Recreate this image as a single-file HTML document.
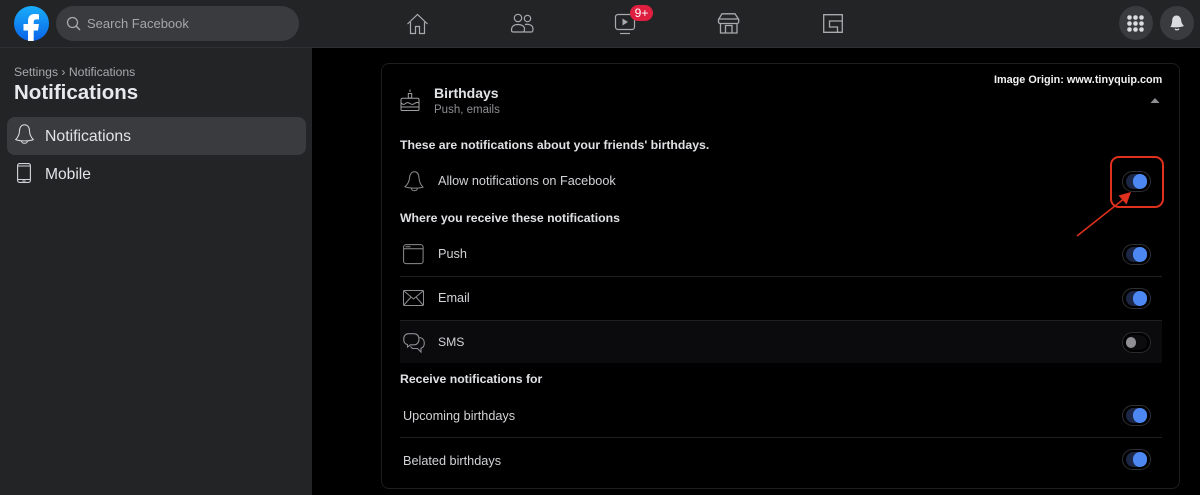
<!DOCTYPE html>
<html><head><meta charset="utf-8"><style>
html,body{margin:0;padding:0;width:1200px;height:495px;overflow:hidden;background:#000;font-family:"Liberation Sans",sans-serif;}
.a{position:absolute;white-space:nowrap;line-height:1;}
.b{position:absolute;}
svg{position:absolute;overflow:visible;fill:none;}
.tg{position:absolute;left:1122px;width:29px;height:21px;border-radius:11px;background:#000;border:1px solid #2e2f33;box-sizing:border-box;}
.tg:before{content:"";position:absolute;left:2.700px;top:2.200px;width:21.600px;height:14.600px;border-radius:8px;background:#1c2745;}
.tg:after{content:"";position:absolute;left:9.700px;top:2.200px;width:14.600px;height:14.600px;border-radius:50%;background:#4d88f2;}
.tg.off{border-color:#2a2b2e;}
.tg.off:before{background:#0c0c0e;}
.tg.off:after{left:2.700px;top:4px;width:10.500px;height:10.500px;background:#8f8f94;}
.sep{position:absolute;left:400px;width:762px;height:1px;background:#1e1f21;}
.l{font-size:12.700px;color:#d2d3d6;}
.h{font-size:12.250px;font-weight:bold;color:#e0e1e4;}
</style></head><body>
<div class="b" style="left:0;top:0;width:1200px;height:47px;background:#232426;border-bottom:1px solid #2f3033;"></div>
<div class="b" style="left:0;top:48px;width:312px;height:447px;background:#232426;"></div>

<!-- logo -->
<div class="b" style="left:14px;top:6px;width:35px;height:35px;border-radius:50%;background:linear-gradient(180deg,#19aefb,#0a63e8);"></div>
<svg style="left:14px;top:6px" width="35" height="35" viewBox="0 0 35 35"><path d="M14 35V24.500H9.500V18H14v-3c0-4.500 2.500-7 6.500-7 1.800 0 3.500.2 4.500.4v5h-2.500c-2.200 0-2.800 1.200-2.800 2.800V18h5.200l-.9 6.500h-4.300V35z" fill="#fff"/></svg>

<!-- search -->
<div class="b" style="left:56px;top:6px;width:243px;height:35px;border-radius:18px;background:#3a3b3e;"></div>
<svg style="left:66px;top:16px" width="15" height="15" viewBox="0 0 15 15"><circle cx="6.500" cy="6.500" r="5" stroke="#a8a9ac" stroke-width="1.300"/><path d="M10.200 10.200L14 14" stroke="#a8a9ac" stroke-width="1.500"/></svg>
<div class="a" style="left:87px;top:17px;font-size:13px;color:#a5a6a9;">Search Facebook</div>

<!-- nav icons -->
<svg style="left:406px;top:12px" width="24" height="24" viewBox="0 0 24 24" stroke="#a9aaad" stroke-width="1.200"><path d="M1.500 12L11.500 2.500 21.500 12M4.500 10v11.500h5v-7h4v7h5V10"/></svg>
<svg style="left:510px;top:13px" width="24" height="20" viewBox="0 0 24 20" stroke="#a9aaad" stroke-width="1.200"><circle cx="8" cy="5" r="3.700"/><circle cx="17.500" cy="5.500" r="3.200"/><path d="M1.500 17c0-3.500 2.500-5.500 6.500-5.500 3.500 0 6.500 1.500 6.500 4.500 0 2-.5 3-1.500 3H3c-1 0-1.500-.7-1.500-2zM15 11.500c4-.8 8 .7 8 4.500 0 2-.5 3-1.500 3H14"/></svg>
<svg style="left:614px;top:13px" width="22" height="22" viewBox="0 0 22 22" stroke="#a9aaad" stroke-width="1.200"><rect x="1.500" y="1.500" width="19" height="15" rx="2.500"/><path d="M6 20.500h10"/><path d="M8.500 5.500l5.500 3.500-5.500 3.500z" fill="#a9aaad" stroke="none"/></svg>
<div class="a" style="left:630px;top:5px;width:23px;height:16px;border-radius:8px;background:#de1f40;color:#fff;font-size:12px;line-height:16px;text-align:center;">9+</div>
<svg style="left:718px;top:13px" width="22" height="21" viewBox="0 0 22 21" stroke="#a9aaad" stroke-width="1.300"><path d="M4 .8h13l3.700 5.700v2.200c0 1.200-1 1.800-2 1.800H2.300c-1 0-1.800-.6-1.800-1.800V6.500zM.8 6h20M2.500 10.500V20h16.500v-9.500M7.500 20v-7.500h6.500V20"/></svg>
<svg style="left:823px;top:14px" width="20" height="19" viewBox="0 0 20 19" stroke="#a9aaad" stroke-width="1.300"><path d="M.7.700h18.600v17.600H.7zM19 7H6.500v6h8v5"/></svg>

<!-- right icons -->
<div class="b" style="left:1119px;top:6px;width:34px;height:34px;border-radius:50%;background:#3a3b3e;"></div>
<div class="b" style="left:1160px;top:6px;width:34px;height:34px;border-radius:50%;background:#3a3b3e;"></div>
<svg style="left:1127px;top:15px" width="18" height="18" viewBox="0 0 18 18"><circle cx="2.500" cy="2.500" r="2.300" fill="#dcdcde"/><circle cx="8.500" cy="2.500" r="2.300" fill="#dcdcde"/><circle cx="14.500" cy="2.500" r="2.300" fill="#dcdcde"/><circle cx="2.500" cy="8.500" r="2.300" fill="#dcdcde"/><circle cx="8.500" cy="8.500" r="2.300" fill="#dcdcde"/><circle cx="14.500" cy="8.500" r="2.300" fill="#dcdcde"/><circle cx="2.500" cy="14.500" r="2.300" fill="#dcdcde"/><circle cx="8.500" cy="14.500" r="2.300" fill="#dcdcde"/><circle cx="14.500" cy="14.500" r="2.300" fill="#dcdcde"/></svg>
<svg style="left:1169px;top:15px" width="16" height="16" viewBox="0 0 16 16"><path d="M7.500 0.500c3 0 4.500 2.500 4.700 5 .2 2.500 1.600 4.200 2.800 5.500-2.500 1.200-9 1.800-13.500 1 .8-1.500 1.600-3.500 1.700-6C3 3 4.500.5 7.500.5z" fill="#dcdcde"/><path d="M6 14c1 1 3 1 4-.2" stroke="#dcdcde" stroke-width="1.300"/></svg>

<!-- sidebar -->
<div class="a" style="left:14px;top:66px;font-size:12.200px;color:#a8a9ac;">Settings › Notifications</div>
<div class="a" style="left:14px;top:83px;font-size:20.500px;font-weight:bold;color:#e8e9ec;">Notifications</div>
<div class="b" style="left:7px;top:117px;width:299px;height:38px;border-radius:8px;background:#3a3b3e;"></div>
<svg style="left:15px;top:124px" width="19" height="21" viewBox="0 0 19 21" stroke="#d4d5d8" stroke-width="1.100"><path d="M9.500 .8c-3.200 0-5 2.800-5 6 0 4-1.500 6.500-3.800 8.800 4 1.700 13.600 1.700 17.600 0-2.300-2.300-3.800-4.800-3.800-8.800 0-3.200-1.800-6-5-6z"/><path d="M6.500 17c.3 3 5.700 3 6 0"/></svg>
<div class="a" style="left:45px;top:129px;font-size:15.800px;color:#e2e3e6;">Notifications</div>
<svg style="left:17px;top:163px" width="14" height="20" viewBox="0 0 14 20" stroke="#d4d5d8" stroke-width="1.100"><rect x=".6" y=".6" width="12.800" height="18.800" rx="2"/><path d="M.6 3h12.800M.6 16.500h12.800M5.500 18h3"/></svg>
<div class="a" style="left:45px;top:167px;font-size:15.600px;color:#e2e3e6;">Mobile</div>

<!-- card -->
<div class="b" style="left:381px;top:63px;width:799px;height:426px;box-sizing:border-box;border:1px solid #1c1d1f;border-radius:8px;"></div>
<svg style="left:400px;top:89px" width="20" height="22" viewBox="0 0 20 22" stroke="#a0a1a4" stroke-width="1"><path d="M10 .5v2.500M8.300 4.500h3.400V9H8.300zM2.500 9.200h15a1.500 1.500 0 0 1 1.500 1.500V20.500a1 1 0 0 1-1 1H2a1 1 0 0 1-1-1V10.700a1.500 1.500 0 0 1 1.500-1.500zM1 14c2 1.800 3 1.800 4.500.5s3-1 4.500 0 3 1.300 4.500 0 3-1.300 4.500-.5M1 18h18"/></svg>
<div class="a" style="left:434px;top:86px;font-size:14px;font-weight:bold;color:#e2e3e6;">Birthdays</div>
<div class="a" style="left:434px;top:103px;font-size:11.500px;color:#8d8e92;margin-top:0;transform:translateY(0);"><span style="position:relative;top:-1px"></span></div>
<div class="a" style="left:434px;top:102.500px;font-size:11.500px;color:#8d8e92;padding-top:2px;">Push, emails</div>
<div class="a" style="left:994px;top:74.500px;font-size:10.850px;font-weight:bold;color:#f2f2f2;">Image Origin: www.tinyquip.com</div>
<svg style="left:1150px;top:98px" width="10" height="5" viewBox="0 0 10 5"><path d="M5 0L9.500 5H0.500z" fill="#8d8e92"/></svg>

<div class="a h" style="left:400px;top:138.500px;">These are notifications about your friends' birthdays.</div>
<svg style="left:404px;top:171px" width="20" height="21" viewBox="0 0 20 21" stroke="#8c8d90" stroke-width="1"><path d="M10.500 .8c-3 0-4.800 2.700-5 6C5.300 10.500 3.500 13.500 1 15.800c4 1.600 14 1.800 18 .4-2.400-2.500-3.800-5.500-4-9.300C14.800 3.500 13.500.8 10.500.8z"/><path d="M7.500 17.500c.3 3 5.500 3 5.800 0"/></svg>
<div class="a l" style="left:438px;top:175px;">Allow notifications on Facebook</div>
<div class="tg" style="top:171px;"></div>

<div class="a h" style="left:400px;top:211.500px;">Where you receive these notifications</div>
<svg style="left:403px;top:244px" width="21" height="20" viewBox="0 0 21 20" stroke="#8c8d90" stroke-width="1"><rect x=".6" y=".6" width="19.500" height="19" rx="2.500"/><path d="M.6 4.800h19.500M2.500 2.700h5"/></svg>
<div class="a l" style="left:438px;top:248px;">Push</div>
<div class="tg" style="top:244px;"></div>
<div class="sep" style="top:276px;"></div>

<svg style="left:403px;top:290px" width="21" height="16" viewBox="0 0 21 16" stroke="#8c8d90" stroke-width="1"><rect x="0.500" y="0.500" width="20" height="15" rx="1"/><path d="M1 1l9.500 8L20 1M1 15l7-8M20 15l-7-8"/></svg>
<div class="a l" style="left:438px;top:292px;">Email</div>
<div class="tg" style="top:288px;"></div>

<div class="b" style="left:400px;top:320px;width:762px;height:43px;background:#0b0b0d;border-top:1px solid #1e1f21;box-sizing:border-box;"></div>
<svg style="left:403px;top:333px" width="22" height="21" viewBox="0 0 22 21" stroke="#8c8d90" stroke-width="1.100"><path d="M5.500 .7h5.500c3 0 5 2.200 5 5.300 0 3.500-2 5.800-5 5.800H7.500L4.500 14v-2.500C2 11 .7 9 .7 6.200.7 3 2.500.7 5.500.7z"/><path d="M16.500 4.500c3 .3 4.800 2.500 4.800 5.500 0 3-1.500 4.800-3.300 5.200V19L14.500 15.500H9.500L7.500 13.500"/></svg>
<div class="a l" style="left:438px;top:336px;font-size:12.200px;">SMS</div>
<div class="tg off" style="top:332px;"></div>

<div class="a h" style="left:400px;top:373px;">Receive notifications for</div>
<div class="a l" style="left:403px;top:409.500px;">Upcoming birthdays</div>
<div class="tg" style="top:405px;"></div>
<div class="sep" style="top:437px;"></div>
<div class="a l" style="left:403px;top:454.500px;">Belated birthdays</div>
<div class="tg" style="top:449px;"></div>

<!-- annotation -->
<div class="b" style="left:1110px;top:156px;width:54px;height:52px;box-sizing:border-box;border:2px solid #e0301e;border-radius:9px;"></div>
<svg style="left:1070px;top:185px" width="70" height="56" viewBox="0 0 70 56"><path d="M7 51L55 13" stroke="#e0301e" stroke-width="1.500"/><path d="M61 7L56.500 19.500L48.500 10.500z" fill="#e0301e"/></svg>
</body></html>
